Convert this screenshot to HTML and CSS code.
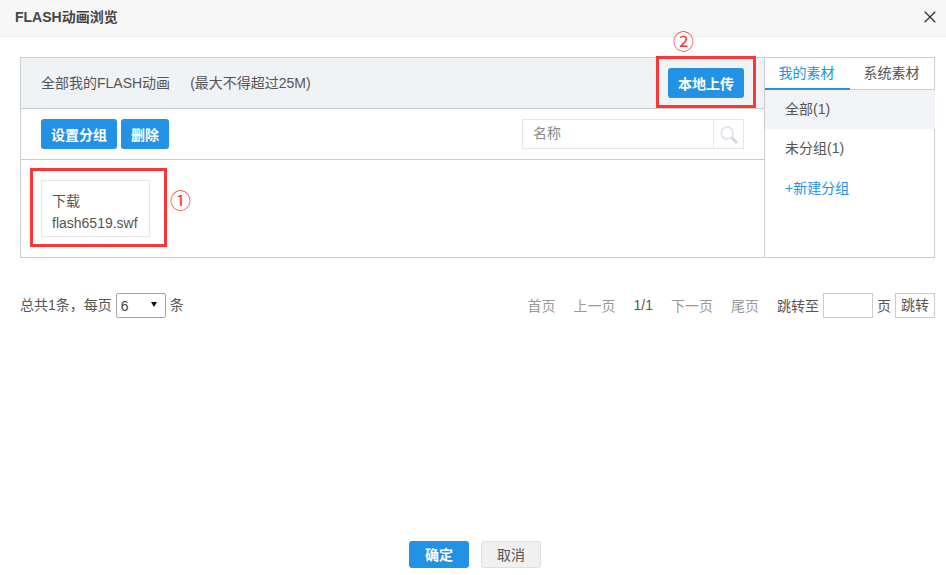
FILE: index.html
```html
<!DOCTYPE html>
<html lang="zh">
<head>
<meta charset="utf-8">
<title>FLASH动画浏览</title>
<link rel="stylesheet" href="styles.css">
</head>
<body>
<div class="dialog">
  <header class="head">
    <span class="head-title">FLASH动画浏览</span>
    <svg class="close" width="12" height="12" viewBox="0 0 12 12"><path d="M.7.7l10.6 10.6M11.3.7L.7 11.3" stroke="#333" stroke-width="1.3" fill="none"/></svg>
  </header>
  <main class="body">
    <section class="panel">
      <div class="left">
        <div class="topbar">
          <span class="topbar-name">全部我的FLASH动画</span>
          <span class="topbar-limit">(最大不得超过25M)</span>
          <button class="btn btn-upload">本地上传</button>
        </div>
        <div class="toolbar">
          <button class="btn btn-group">设置分组</button>
          <button class="btn btn-del">删除</button>
          <div class="search">
            <span class="search-input">名称</span>
            <span class="search-icon">
              <svg width="20" height="20" viewBox="0 0 20 20"><circle cx="8.2" cy="8.2" r="6" fill="none" stroke="#dfe3e8" stroke-width="1.8"/><path d="M12.6 12.6l5.4 5.4" stroke="#d3d8df" stroke-width="2.8" fill="none"/></svg>
            </span>
          </div>
        </div>
        <div class="files">
          <div class="file">
            <div class="file-dl">下载</div>
            <div class="file-name">flash6519.swf</div>
          </div>
        </div>
      </div>
      <aside class="side">
        <div class="tabs">
          <span class="tab tab-on">我的素材</span>
          <span class="tab">系统素材</span>
        </div>
        <div class="side-item side-on">全部(1)</div>
        <div class="side-item">未分组(1)</div>
        <div class="side-item side-new">+新建分组</div>
      </aside>
      <div class="mark mark-file"></div>
      <div class="mark mark-upload"></div>
      <span class="num num-1">①</span>
      <span class="num num-2">②</span>
    </section>
    <div class="pager">
      <span class="pager-label">总共1条<span class="comma">，</span>每页</span>
      <span class="select"><span>6</span><i class="caret"></i></span>
      <span class="pager-label">条</span>
      <nav class="pages">
        <span class="pg pg-off">首页</span>
        <span class="pg pg-off">上一页</span>
        <span class="pg">1/1</span>
        <span class="pg pg-off">下一页</span>
        <span class="pg pg-off">尾页</span>
        <span class="jump">跳转至</span>
        <span class="jump-input"></span>
        <span class="jump-unit">页</span>
        <span class="jump-btn">跳转</span>
      </nav>
    </div>
  </main>
  <footer class="foot">
    <button class="btn btn-ok">确定</button>
    <button class="btn-cancel">取消</button>
  </footer>
</div>
</body>
</html>
```
FILE: styles.css
```css
* { box-sizing: border-box; }
html, body { margin: 0; padding: 0; background: #fff; }
body { font-family: "Liberation Sans", "Noto Sans CJK SC", sans-serif; font-size: 14px; color: #555; }
button { font-family: inherit; }
.dialog { width: 946px; height: 575px; display: flex; flex-direction: column; overflow: hidden; }
.head { height: 37px; flex: none; background: #f7f7f7; border-bottom: 1px solid #eee; padding: 0 10px 0 15px; display: flex; align-items: center; justify-content: space-between; }
.head-title { font-size: 14px; font-weight: bold; color: #444; position: relative; top: -2px; }
.close { position: relative; top: -1px; }
.body { flex: 1; padding: 20px 11px 0 20px; }
.panel { position: relative; display: flex; height: 201px; border: 1px solid #ccc; }
.left { width: 744px; flex: none; border-right: 1px solid #ccc; }
.topbar { height: 51px; background: #f0f3f6; border-bottom: 1px solid #ccc; padding: 0 20px; display: flex; align-items: center; color: #555; }
.topbar-name, .topbar-limit { position: relative; top: -1px; }
.topbar-limit { margin-left: 20px; }
.btn { border: 0; border-radius: 3px; background: #2492e4; color: #fff; font-size: 14px; font-weight: bold; padding: 0; height: 30px; cursor: pointer; }
.btn-upload { width: 76px; margin-left: auto; }
.toolbar { height: 51px; border-bottom: 1px solid #ccc; padding: 10px 20px; display: flex; align-items: flex-start; gap: 4px; }
.btn-group { width: 76px; }
.btn-del { width: 48px; }
.search { margin-left: auto; width: 222px; height: 30px; border: 1px solid #e6e6e6; display: flex; }
.search-input { flex: 1; padding-left: 10px; line-height: 27px; color: #888; border-right: 1px solid #e6e6e6; }
.search-icon { width: 29px; flex: none; display: flex; align-items: center; justify-content: center; padding-top: 1px; }
.files { padding: 20px; }
.file { width: 109px; height: 57px; border: 1px solid #e6e6e6; padding: 9px 10px 0; line-height: 22px; color: #555; white-space: nowrap; }
.side { flex: 1; }
.tabs { height: 32px; display: flex; border-bottom: 1px solid #ccc; }
.tab { width: 85px; height: 32px; padding-right: 2px; text-align: center; line-height: 31px; color: #555; }
.tab-on { color: #2492e4; border-bottom: 2px solid #2492e4; }
.side-item { height: 39px; padding-left: 20px; line-height: 38px; color: #555; }
.side-on { background: #f2f3f7; }
.side-new { color: #2492e4; margin-top: 1px; }
.mark { position: absolute; border: 3px solid #fb3638; }
.mark-file { left: 9px; top: 110px; width: 137px; height: 79px; }
.mark-upload { left: 635px; top: -2px; width: 100px; height: 52px; }
.num { position: absolute; color: #fb3638; font-family: "Liberation Serif", "Noto Sans CJK SC", serif; font-size: 21px; line-height: 24px; }
.num-1 { left: 149px; top: 131px; }
.num-2 { left: 652px; top: -28px; }
.pager { height: 25px; margin-top: 35px; display: flex; align-items: center; gap: 4px; color: #555; }
.pager-label { position: relative; top: -2px; }
.comma { font-family: "Noto Sans CJK TC", sans-serif; }
.pg, .jump, .jump-unit { position: relative; top: -1px; }
.select { width: 50px; height: 25px; border: 1px solid #a6a6a6; border-radius: 2px; padding-left: 4px; font-size: 14px; line-height: 25px; color: #444; position: relative; }
.caret { position: absolute; right: 8px; top: 8px; border-style: solid; border-width: 5px 3px 0; border-color: #111 transparent transparent; }
.pages { margin-left: auto; display: flex; align-items: center; }
.pg { margin-left: 18px; }
.pg-off { color: #999; }
.jump { margin-left: 18px; }
.jump-input { width: 50px; height: 25px; border: 1px solid #ccc; margin-left: 4px; }
.jump-unit { margin-left: 4px; }
.jump-btn { width: 40px; height: 25px; border: 1px solid #ccc; margin-left: 4px; text-align: center; line-height: 23px; }
.foot { flex: none; height: 27px; margin-bottom: 7px; display: flex; justify-content: center; gap: 12px; padding-left: 4px; }
.btn-ok { width: 60px; height: 27px; padding-bottom: 2px; }
.btn-cancel { width: 60px; height: 27px; padding: 0 0 2px; border: 1px solid #e0e0e0; border-radius: 3px; background: #f0f0f0; color: #555; font-size: 14px; }
```
